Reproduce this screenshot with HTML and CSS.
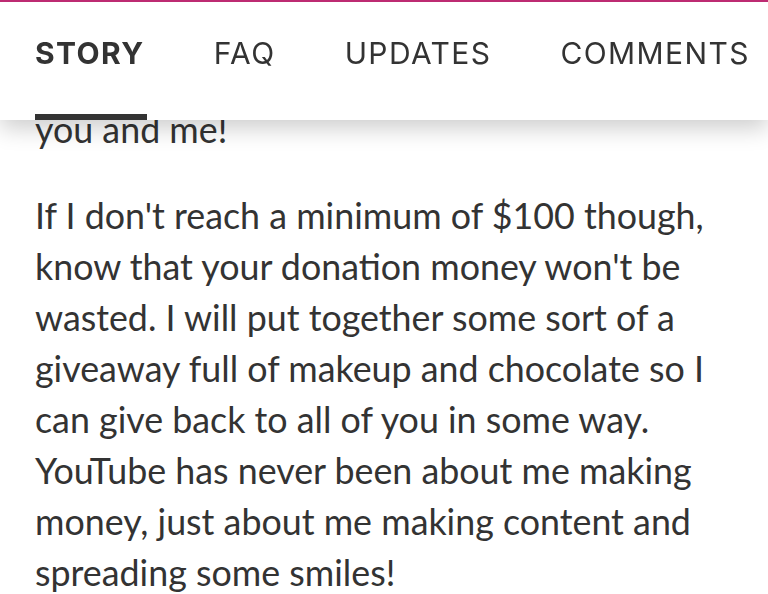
FILE: index.html
```html
<!DOCTYPE html>
<html lang="en">
<head>
    <meta charset="UTF-8">
    <meta name="viewport" content="width=device-width, initial-scale=1.0">
    <title>Story</title>
    <link rel="stylesheet" href="styles.css">
</head>
<body>
    <header class="tab-bar">
        <nav class="tabs">
            <a class="tab active">STORY</a>
            <a class="tab">FAQ</a>
            <a class="tab">UPDATES</a>
            <a class="tab">COMMENTS</a>
        </nav>
    </header>
    <main class="story">
        <p>you and me!</p>
        <p>If I don't reach a minimum of $100 though, know that your donation money won't be wasted. I will put together some sort of a giveaway full of makeup and chocolate so I can give back to all of you in some way. YouTube has never been about me making money, just about me making content and spreading some smiles!</p>
    </main>
</body>
</html>
```

FILE: styles.css
```css
/* General Styling */
body {
    margin: 0;
    padding: 0;
    background-color: #ffffff;
    color: #333333;
    font-family: 'Lato', sans-serif;
}

/* Tab bar sits over the story while scrolling */
.tab-bar {
    position: fixed;
    top: 0;
    left: 0;
    right: 0;
    z-index: 10;
    height: 118px;
    background-color: #ffffff;
    border-top: 2px solid #bd2b72;
    box-shadow: 0 8px 22px rgba(0, 0, 0, 0.2);
}

.tabs {
    display: flex;
    justify-content: space-between;
    height: 100%;
    padding: 0 18px 0 35px;
}

.tab {
    position: relative;
    padding-top: 33px;
    font-family: 'Inter', sans-serif;
    font-size: 30px;
    letter-spacing: 1.4px;
    color: #333333;
    cursor: pointer;
}

.tab.active {
    font-weight: 700;
}

.tab.active::after {
    content: "";
    position: absolute;
    left: 0;
    right: -2px;
    bottom: 0;
    height: 6px;
    background-color: #333333;
}

.story {
    padding: 104px 35px 0;
}

.story p {
    margin: 0 0 35px;
    font-size: 35.8px;
    line-height: 51px;
}
```
